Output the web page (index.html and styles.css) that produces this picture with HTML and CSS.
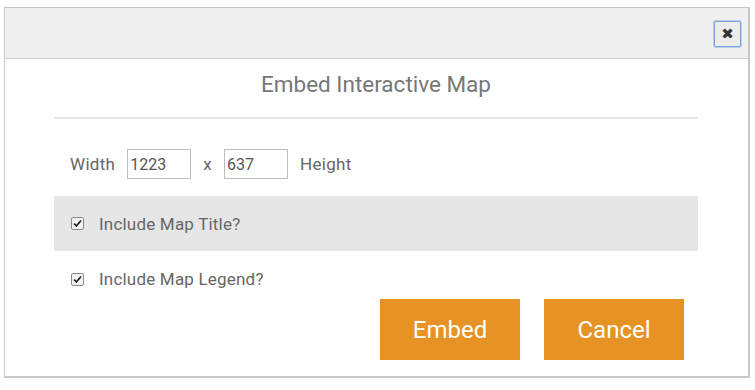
FILE: index.html
```html
<!DOCTYPE html>
<html>
<head>
<meta charset="utf-8">
<link rel="stylesheet" href="styles.css">
</head>
<body>
<div class="dialog">
  <div class="header">
    <button class="close" aria-label="Close">✖</button>
  </div>
  <div class="content">
    <h1 class="title">Embed Interactive Map</h1>
    <div class="rule"></div>
    <div class="dims">
      <span class="label">Width</span>
      <input class="num" type="text" value="1223">
      <span class="x">x</span>
      <input class="num" type="text" value="637">
      <span class="label">Height</span>
    </div>
    <label class="opt shaded"><input type="checkbox" checked><span>Include Map Title?</span></label>
    <label class="opt"><input type="checkbox" checked><span>Include Map Legend?</span></label>
    <div class="actions">
      <button class="btn">Embed</button>
      <button class="btn">Cancel</button>
    </div>
  </div>
</div>
</body>
</html>
```
FILE: styles.css
```css
* { box-sizing: border-box; }
html, body { margin: 0; padding: 0; background: #fff; }
body { font-family: Roboto, "Liberation Sans", sans-serif; color: #666; }
.dialog {
  margin: 7px 0 0 4px;
  width: 746px;
  height: 371px;
  border: 1px solid #c8c8c8;
  border-bottom-width: 2px;
  border-right-width: 2px;
  background: #fff;
}
.header {
  height: 51px;
  background: #f0f0f0;
  border-bottom: 1px solid #cfcfcf;
  display: flex;
  justify-content: flex-end;
  align-items: flex-start;
  padding: 13px 7px 0 0;
}
.close {
  width: 27px;
  height: 26px;
  padding: 0;
  border: 1px solid #7aa0e0;
  box-shadow: 0 0 0 1px #b9cdf2;
  border-radius: 2px;
  background: #ececec;
  color: #333;
  font-size: 15px;
  line-height: 22px;
  font-family: "DejaVu Sans", sans-serif;
}
.content { padding: 0 50px 0 49px; }
.title {
  margin: 0;
  height: 50px;
  line-height: 50px;
  text-align: center;
  font-weight: 400;
  font-size: 22.5px;
  color: #777;
}
.rule { height: 2px; background: #e6e6e6; margin-top: 8px; }
.dims {
  display: flex;
  align-items: center;
  height: 30px;
  margin-top: 30px;
  padding-left: 16px;
  font-size: 17px;
  letter-spacing: 0.3px;
}
.dims .label { margin-right: 12px; }
.dims .label:last-child { margin-left: 12px; margin-right: 0; }
.num {
  width: 64px;
  height: 30px;
  border: 1px solid #bdbdbd;
  padding: 0 2px;
  font: 16px Roboto, "Liberation Sans", sans-serif;
  color: #555;
}
.x { margin: 0 12px; }
.opt {
  display: flex;
  align-items: center;
  height: 55px;
  padding-left: 16px;
  font-size: 17px;
  letter-spacing: 0.2px;
  color: #666;
}
.opt.shaded { background: #e6e6e6; margin-top: 17px; }
.opt:not(.shaded) { height: 56px; }
.opt input {
  appearance: none;
  -webkit-appearance: none;
  width: 13px;
  height: 13px;
  margin: 0 15px 0 1px;
  border: 1px solid #8a8a8a;
  border-radius: 2px;
  background: #f4f4f4 url("data:image/svg+xml,%3Csvg xmlns='http://www.w3.org/2000/svg' viewBox='0 0 11 11'%3E%3Cpath d='M2 5.5 L4.4 8 L9 2.5' fill='none' stroke='%23222' stroke-width='1.8'/%3E%3C/svg%3E") center/11px 11px no-repeat;
}
.actions {
  display: flex;
  justify-content: flex-end;
  gap: 24px;
  padding-right: 14px;
  margin-top: -8px;
}
.btn {
  width: 140px;
  height: 61px;
  border: none;
  background: #e69225;
  color: #fff;
  font: 24px Roboto, "Liberation Sans", sans-serif;
}
```
